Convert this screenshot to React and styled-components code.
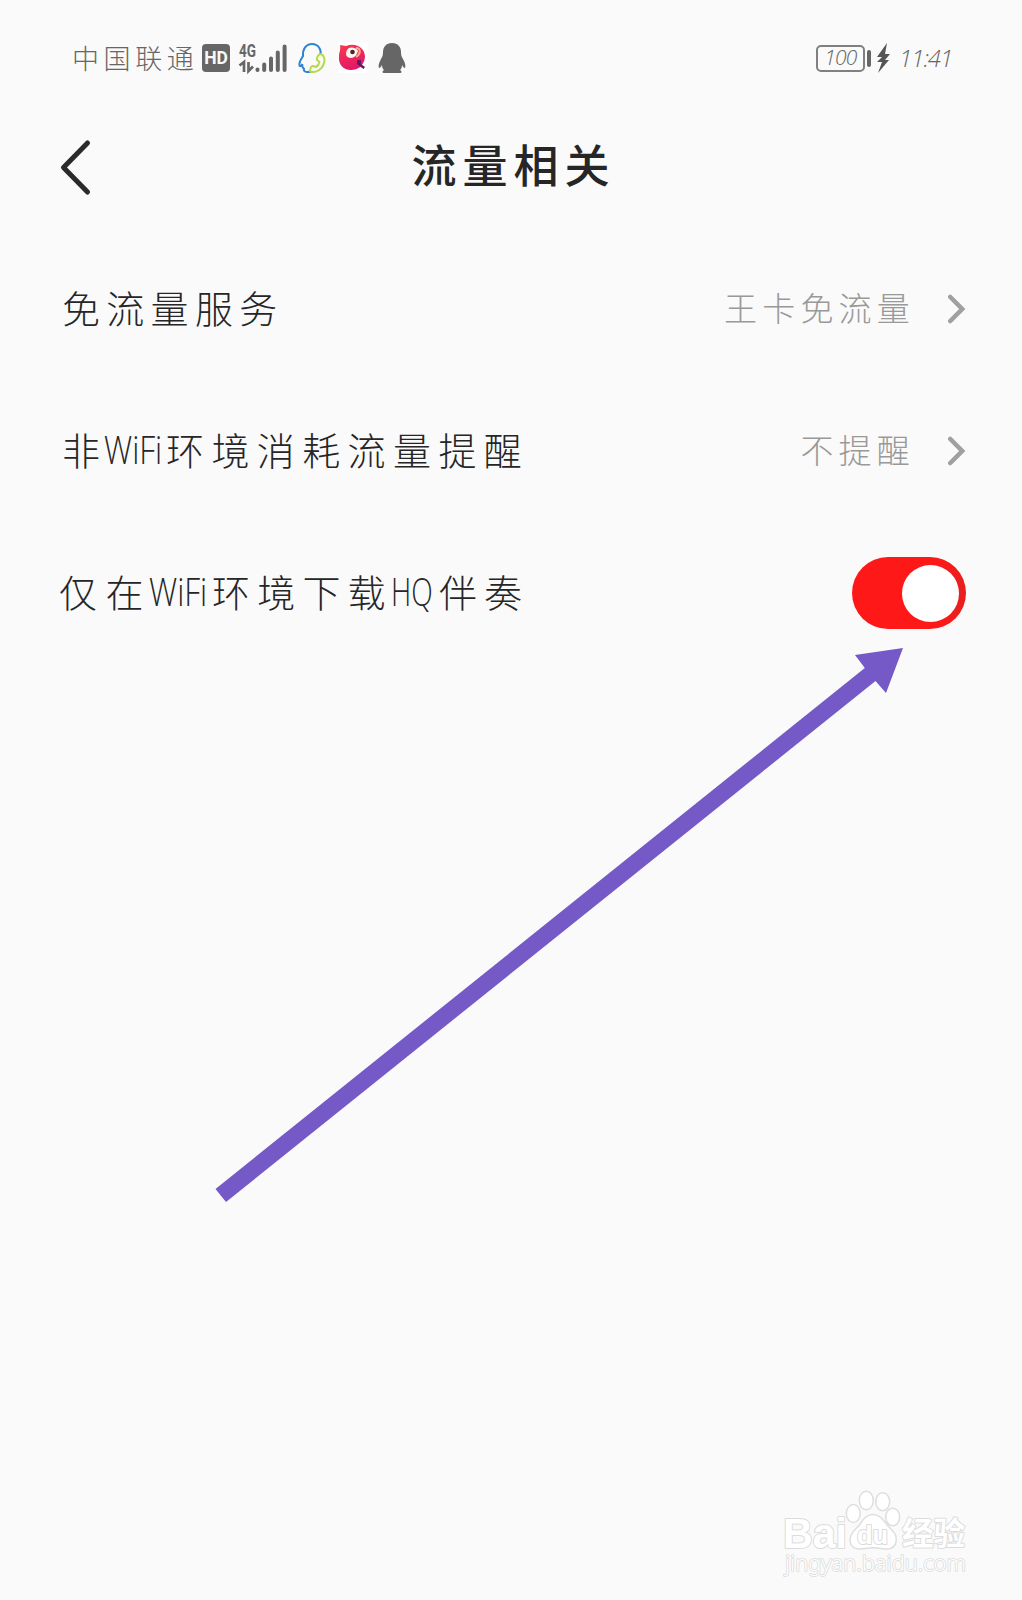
import React from "react";
import styled, { createGlobalStyle } from "styled-components";

const Global = createGlobalStyle`
  *, *::before, *::after { box-sizing: border-box; }
  body { margin: 0; background: #fafafa; }
`;

const cjk = `"Noto Sans CJK SC", sans-serif`;

const Screen = styled.main`
  position: relative;
  width: 1022px;
  height: 1600px;
  overflow: hidden;
  background: #fafafa;
  color: #262626;
  font-family: ${cjk};
  font-weight: 300;
`;

const StatusBar = styled.header`
  display: flex;
  justify-content: space-between;
  align-items: center;
  height: 116px;
  padding: 0 70px 0 72px;
  color: #666;
`;

const StatusGroup = styled.div`
  display: flex;
  align-items: center;
`;

const Carrier = styled.span`
  width: 130px;
  font-size: 27px;
  line-height: 32px;
  letter-spacing: 4.6px;
  white-space: nowrap;
`;

const HdBadge = styled.span`
  display: flex;
  align-items: center;
  justify-content: center;
  width: 28px;
  height: 28px;
  border-radius: 4px;
  background: #666;
  color: #fafafa;
  font: 700 17.5px/28px "Roboto", sans-serif;
`;

const Signal = styled.svg`
  width: 48px;
  height: 32px;
  margin-left: 9px;
  overflow: visible;
`;

const AppIcon = styled.svg`
  width: 30px;
  height: 32px;
  margin-left: ${(p) => p.$gap}px;
`;

const Battery = styled.span`
  display: flex;
  align-items: center;
  justify-content: center;
  width: 49px;
  height: 27px;
  border: 2px solid #808080;
  border-radius: 5px;
  font: italic 300 21px/20px "Open Sans", sans-serif;
  letter-spacing: -0.8px;
  padding-bottom: 2px;
`;

const BatteryCap = styled.span`
  width: 4px;
  height: 17px;
  margin-left: 2px;
  border-radius: 2px;
  background: #666;
`;

const Bolt = styled.svg`
  width: 14px;
  height: 30px;
  margin: 0 9px 0 5px;
`;

const Clock = styled.span`
  width: 53px;
  font: italic 300 24px/30px "Open Sans", sans-serif;
  letter-spacing: -1px;
  white-space: nowrap;
`;

const TitleBar = styled.div`
  display: grid;
  grid-template-columns: 120px 1fr 120px;
  align-items: center;
  height: 102px;
  margin-bottom: 20px;
`;

const BackButton = styled.button`
  display: flex;
  align-items: center;
  height: 64px;
  padding: 0 0 0 58px;
  border: 0;
  background: none;
`;

const Title = styled.h1`
  margin: 0 0 6px;
  padding-left: 5px;
  text-align: center;
  font-size: 45px;
  line-height: 64px;
  font-weight: 500;
  letter-spacing: 6px;
`;

const Row = styled.div`
  display: flex;
  align-items: center;
  justify-content: space-between;
  height: 142px;
  padding: 0 56px 0 ${(p) => p.$inset || 62}px;
`;

const Label = styled.div`
  display: flex;
  align-items: center;
  margin-bottom: 4px;
  font-size: 38px;
  line-height: 54px;
  white-space: nowrap;
`;

const Run = styled.span`
  width: ${(p) => p.$width}px;
  letter-spacing: ${(p) => p.$track}px;
`;

const Latin = styled.span`
  width: ${(p) => p.$width}px;
  font: 300 38px/54px "Open Sans", sans-serif;
  transform: scaleX(${(p) => p.$squeeze});
  transform-origin: left center;
`;

const Value = styled.div`
  display: flex;
  align-items: center;
  gap: 32px;
  color: #999;
  font-size: 33px;
  line-height: 48px;
  white-space: nowrap;
`;

const ValueText = styled.span`
  margin-bottom: 4px;
  letter-spacing: 5.2px;
`;

const Switch = styled.button`
  display: flex;
  align-items: center;
  justify-content: flex-end;
  width: 114px;
  height: 72px;
  padding: 0 7px;
  border: 0;
  border-radius: 36px;
  background: linear-gradient(90deg, #ff1818 78%, #e5201f);
`;

const Knob = styled.span`
  width: 57px;
  height: 57px;
  border-radius: 50%;
  background: #fff;
`;

const Pointer = styled.svg`
  position: absolute;
  left: 210px;
  top: 640px;
  width: 700px;
  height: 570px;
`;

const Watermark = styled.svg`
  position: absolute;
  left: 776px;
  top: 1484px;
  width: 200px;
  height: 104px;
`;

function Chevron() {
  return (
    <svg width="19" height="30" viewBox="0 0 19 30" fill="none">
      <path d="M3.300 3 L15.200 15 L3.300 27" stroke="#a0a0a0" strokeWidth="4.600" strokeLinecap="round" strokeLinejoin="miter" />
    </svg>
  );
}

function SignalIcon() {
  return (
    <Signal viewBox="0 0 48 32">
      <text x="0" y="15" textLength="17" lengthAdjust="spacingAndGlyphs" fill="#666" fontFamily="Roboto, sans-serif" fontWeight="700" fontSize="18">4G</text>
      <path d="M0.500 23.500 L5 20 V30 M9.500 20 V29 L14 24.500" stroke="#666" strokeWidth="2.700" fill="none" />
      <g stroke="#666" strokeWidth="4" strokeLinecap="round">
        <path d="M18.500 27.500 V28 M25.200 22.500 V28 M32 16.500 V28 M38.800 10.500 V28 M45.600 4.500 V28" />
      </g>
    </Signal>
  );
}

function QqCallIcon() {
  return (
    <AppIcon $gap={11} viewBox="0 0 30 32">
      <path d="M14 29 C10 31 5 30 6 27 C4 25 4 23 4.500 22 C2.500 25 1 25 1.500 21 C2 18 4 16 5 14 C4.500 7 8 2 14 2 C20 2 23.500 7 22.500 13" fill="none" stroke="#2d84d0" strokeWidth="2" strokeLinecap="round" />
      <path d="M22 12 C25 12 27.500 16 26 21 C24.500 27 18 31.500 12 29.500 C12 27 13 24 15 24 L18 25 C20 24 21 22 21.500 20 L19 18 C18.500 16 20 13 22 12 Z" fill="#fbfdf5" stroke="#b4d94b" strokeWidth="2" strokeLinejoin="round" />
    </AppIcon>
  );
}

function ParrotIcon() {
  return (
    <AppIcon $gap={10} viewBox="0 0 30 32">
      <defs>
        <linearGradient id="parrot" x1="0" y1="0" x2="0.4" y2="1">
          <stop offset="0" stopColor="#f53c4c" />
          <stop offset="1" stopColor="#e51668" />
        </linearGradient>
      </defs>
      <path d="M0 0 H30 V31 H0 Z" fill="#fff" />
      <path d="M2 3 L8 4 C18 0 27 6 27 15 C26 24 20 28 13 28 C5 28 0 22 1 14 C1 10 3 8 2 3 Z" fill="url(#parrot)" />
      <path d="M9 8 C11 4 18 5 20 9 C19 12 17 16 13 16 C8 16 7 12 9 8 Z" fill="#fff4ef" />
      <circle cx="14.500" cy="10" r="2.300" fill="#492530" />
      <path d="M18 6 C23 6 23 12 18 15" fill="none" stroke="#f5b093" strokeWidth="2" />
      <path d="M19 18 L23 18 L23 22 L27 25 L25.500 27 L21.500 24 L19 22 Z" fill="#66175e" />
    </AppIcon>
  );
}

function PenguinIcon() {
  return (
    <AppIcon $gap={9} viewBox="0 0 30 32">
      <path d="M15 1 C21 1 24 5 24 10 C24 14 25 15 26.500 18 C28 21 29 24 28 26 C27 26 26 25 25 23 C25 26 24 27 23 28 C25 29 25 31 23 31 H7 C5 31 5 29 7 28 C6 27 5 26 5 23 C4 25 3 26 2 26 C1 24 2 21 3.500 18 C5 15 6 14 6 10 C6 5 9 1 15 1 Z" fill="#666" />
    </AppIcon>
  );
}

function BaiduMark() {
  return (
    <Watermark viewBox="0 0 200 104">
      <g fill="#fff" stroke="#dedede" strokeWidth="1.500">
        <ellipse cx="77.300" cy="29.500" rx="7" ry="9" />
        <ellipse cx="90.300" cy="16.500" rx="7" ry="9.300" />
        <ellipse cx="106.700" cy="17.700" rx="7" ry="9" />
        <ellipse cx="116.700" cy="33" rx="7" ry="8.800" />
        <path d="M97 30.500 C104 30.500 107 36 112 42 C117 47 121.500 51 120 58 C118 66 111 65.500 105 64.500 C99 63.500 95 63.500 89 64.500 C81 66 74 64 74 56 C74 48 80 46 84 40 C88 34 91 30.500 97 30.500 Z" />
      </g>
      <g fill="#fff" stroke="#dcdcdc" strokeWidth="2" strokeLinejoin="round" paintOrder="stroke" fontFamily='"Liberation Sans", sans-serif'>
        <text x="7" y="64" fontSize="42" fontWeight="700" textLength="64" lengthAdjust="spacingAndGlyphs">Bai</text>
        <text x="81" y="60" fontSize="25" fontWeight="700" textLength="31" lengthAdjust="spacingAndGlyphs">du</text>
        <text x="126" y="61" fontSize="32" fontWeight="700" textLength="63" lengthAdjust="spacingAndGlyphs" fontFamily='"Noto Sans CJK SC", sans-serif'>经验</text>
        <text x="9" y="87" fontSize="21" strokeWidth="1.600" textLength="181" lengthAdjust="spacingAndGlyphs" fontFamily='"Noto Sans", sans-serif'>jingyan.baidu.com</text>
      </g>
    </Watermark>
  );
}

export default function App() {
  return (
    <>
      <Global />
      <Screen>
        <StatusBar>
          <StatusGroup>
            <Carrier>中国联通</Carrier>
            <HdBadge>HD</HdBadge>
            <SignalIcon />
            <QqCallIcon />
            <ParrotIcon />
            <PenguinIcon />
          </StatusGroup>
          <StatusGroup>
            <Battery>100</Battery>
            <BatteryCap />
            <Bolt viewBox="0 0 14 30">
              <path d="M11 0 L1 14 H6 L1 19 H6 L2 30 L13 17 H9 L14 11 H9 Z" fill="#555" />
            </Bolt>
            <Clock>11:41</Clock>
          </StatusGroup>
        </StatusBar>

        <TitleBar>
          <BackButton aria-label="返回">
            <svg width="36" height="62" viewBox="0 0 36 62" fill="none">
              <path d="M29.500 7 L5.500 31.500 L29.500 56" stroke="#2a2a2a" strokeWidth="5" strokeLinecap="round" strokeLinejoin="round" />
            </svg>
          </BackButton>
          <Title>流量相关</Title>
        </TitleBar>

        <Row>
          <Label>
            <Run $width={220} $track={6.3}>免流量服务</Run>
          </Label>
          <Value>
            <ValueText>王卡免流量</ValueText>
            <Chevron />
          </Value>
        </Row>

        <Row>
          <Label>
            <Run $width={42} $track={0}>非</Run>
            <Latin $width={62} $squeeze={0.83}>WiFi</Latin>
            <Run $width={360} $track={7.4}>环境消耗流量提醒</Run>
          </Label>
          <Value>
            <ValueText>不提醒</ValueText>
            <Chevron />
          </Value>
        </Row>

        <Row $inset={59}>
          <Label>
            <Run $width={90} $track={8.5}>仅在</Run>
            <Latin $width={63} $squeeze={0.83}>WiFi</Latin>
            <Run $width={179} $track={7.2}>环境下载</Run>
            <Latin $width={48} $squeeze={0.74}>HQ</Latin>
            <Run $width={90} $track={7}>伴奏</Run>
          </Label>
          <Switch role="switch" aria-checked="true">
            <Knob />
          </Switch>
        </Row>

        <Pointer viewBox="210 640 700 570">
          <path d="M903 648 L855 655 L864.800 668 L215.500 1189 L226 1202 L875.500 681 L886 693 Z" fill="#7459c7" />
        </Pointer>
        <BaiduMark />
      </Screen>
    </>
  );
}
